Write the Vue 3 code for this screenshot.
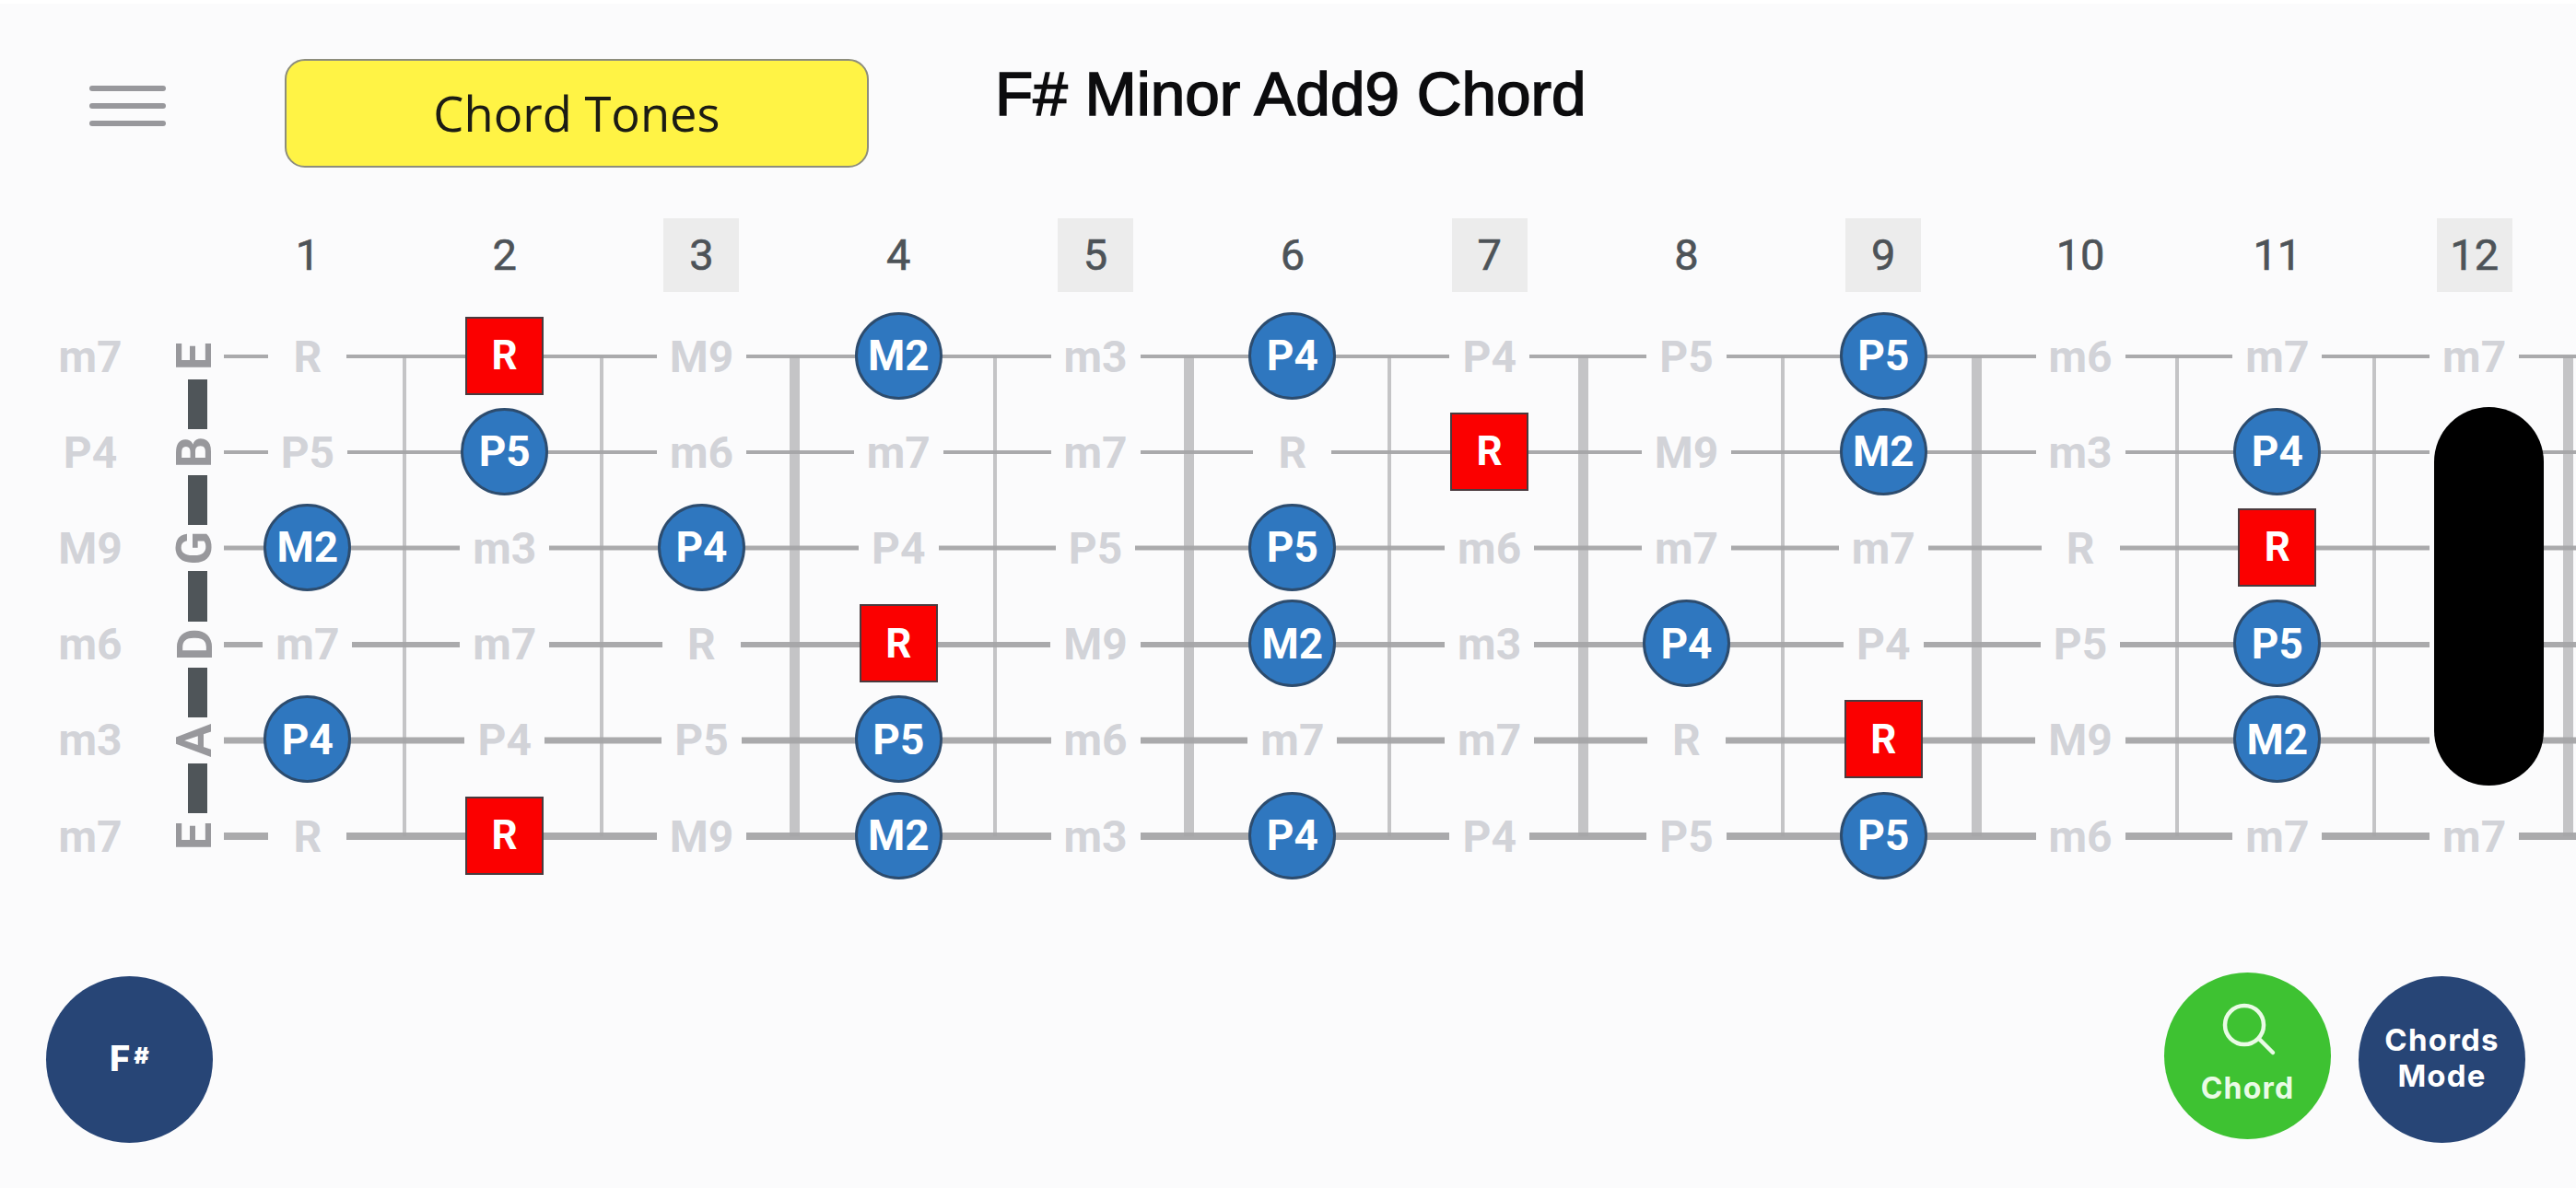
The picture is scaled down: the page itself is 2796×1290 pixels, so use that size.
<script setup>
const frets = [1, 2, 3, 4, 5, 6, 7, 8, 9, 10, 11, 12]
const marked = [3, 5, 7, 9, 12]
const thick = [3, 5, 7, 9, 12]

const rows = [
  { name: 'E', open: 'm7', size: 4, notes: ['R', 'R*', 'M9', 'M2o', 'm3', 'P4o', 'P4', 'P5', 'P5o', 'm6', 'm7', 'm7'] },
  { name: 'B', open: 'P4', size: 4, notes: ['P5', 'P5o', 'm6', 'm7', 'm7', 'R', 'R*', 'M9', 'M2o', 'm3', 'P4o', ''] },
  { name: 'G', open: 'M9', size: 5, notes: ['M2o', 'm3', 'P4o', 'P4', 'P5', 'P5o', 'm6', 'm7', 'm7', 'R', 'R*', ''] },
  { name: 'D', open: 'm6', size: 6, notes: ['m7', 'm7', 'R', 'R*', 'M9', 'M2o', 'm3', 'P4o', 'P4', 'P5', 'P5o', ''] },
  { name: 'A', open: 'm3', size: 7, notes: ['P4o', 'P4', 'P5', 'P5o', 'm6', 'm7', 'm7', 'R', 'R*', 'M9', 'M2o', ''] },
  { name: 'E', open: 'm7', size: 8, notes: ['R', 'R*', 'M9', 'M2o', 'm3', 'P4o', 'P4', 'P5', 'P5o', 'm6', 'm7', 'm7'] }
]

const kind = (n) => (n.endsWith('*') ? 'root' : n.endsWith('o') ? 'tone' : 'muted')
const text = (n) => n.replace(/[*o]$/, '')
</script>

<template>
  <div class="app">
    <header class="header">
      <div class="menu"><span></span><span></span><span></span></div>
      <div class="mode">Chord Tones</div>
      <h1 class="title">F# Minor Add9 Chord</h1>
    </header>

    <div class="numbers">
      <div v-for="f in frets" :key="f" class="number" :class="{ marked: marked.includes(f) }">{{ f }}</div>
    </div>

    <section class="board">
      <div class="frets">
        <div v-for="f in frets" :key="f" class="fret" :class="{ thick: thick.includes(f) }"></div>
      </div>
      <div class="nut"></div>
      <div v-for="(row, r) in rows" :key="r" class="row">
        <i class="string" :style="{ height: row.size + 'px' }"></i>
        <div class="open">{{ row.open }}</div>
        <div class="name"><span>{{ row.name }}</span></div>
        <div v-for="(n, c) in row.notes" :key="c" class="cell">
          <span class="note" :class="[kind(n), { blank: !n }]">{{ text(n) }}</span>
        </div>
      </div>
      <div class="capo"></div>
    </section>

    <footer class="footer">
      <button class="round navy root-key">F<sup>#</sup></button>
      <div class="actions">
        <button class="round green">
          <svg class="search" viewBox="0 0 60 60" width="60" height="60" fill="none" stroke="currentColor" stroke-width="4.5" stroke-linecap="round">
            <circle cx="25" cy="24" r="21" />
            <line x1="41" y1="39" x2="56" y2="54" />
          </svg>
          <span>Chord</span>
        </button>
        <button class="round navy chords">Chords<br />Mode</button>
      </div>
    </footer>
  </div>
</template>

<style scoped>
.app {
  box-sizing: border-box;
  width: 2796px;
  height: 1290px;
  overflow: hidden;
  background: #fbfbfc;
  border-top: 4px solid #ffffff;
  font-family: Roboto, "Liberation Sans", sans-serif;
}

.header {
  display: flex;
  align-items: flex-start;
  height: 233px;
  padding: 60px 0 0 97px;
  box-sizing: border-box;
}
.menu {
  display: flex;
  flex-direction: column;
  gap: 13px;
  width: 83px;
  margin-top: 29px;
}
.menu span {
  height: 6px;
  border-radius: 3px;
  background: #98989c;
}
.mode {
  box-sizing: border-box;
  width: 634px;
  height: 118px;
  margin-left: 129px;
  border: 2px solid #8d8d7c;
  border-radius: 22px;
  background: #fff345;
  color: #1c1c14;
  font-family: "Open Sans", sans-serif;
  font-size: 52.5px;
  line-height: 114px;
  text-align: center;
}
.title {
  margin: 2px 0 0 137px;
  color: #0c0c0e;
  font-family: "Liberation Sans", Arial, sans-serif;
  font-size: 67.5px;
  font-weight: 400;
  line-height: 72px;
  -webkit-text-stroke: 1.6px #0c0c0e;
}

.numbers {
  display: grid;
  grid-template-columns: repeat(12, 213.8px);
  padding-left: 227px;
  height: 80px;
  margin-bottom: 18px;
}
.number {
  justify-self: center;
  width: 82px;
  height: 80px;
  color: #4d5358;
  font-size: 47px;
  font-weight: 400;
  line-height: 80px;
  text-align: center;
  -webkit-text-stroke: 0.6px #4d5358;
}
.number.marked {
  background: #ececec;
}

.board {
  position: relative;
  height: 625px;
}
.frets {
  position: absolute;
  top: 52px;
  bottom: 52px;
  left: 227px;
  display: grid;
  grid-template-columns: repeat(12, 213.8px);
}
.fret {
  box-sizing: border-box;
  border-right: 4px solid #c4c4c6;
}
.fret.thick {
  border-right-width: 11px;
}
.nut {
  position: absolute;
  top: 72px;
  left: 204px;
  width: 21px;
  height: 476px;
  background: #4f5559;
}
.row {
  position: relative;
  display: grid;
  grid-template-columns: 196px 31px repeat(12, 213.8px);
  align-items: center;
  height: 104.2px;
}
.string {
  position: absolute;
  top: 50%;
  left: 243px;
  right: 0;
  transform: translateY(-50%);
  background: #a5a5a8;
  opacity: 0.95;
}
.open {
  color: #d2d3d8;
  font-size: 48px;
  font-weight: 700;
  text-align: center;
}
.name {
  position: relative;
  display: flex;
  align-items: center;
  justify-content: center;
  height: 50px;
  margin: 0 -4px;
  background: #fbfbfc;
}
.name span {
  color: #98989c;
  font-size: 54px;
  font-weight: 700;
  line-height: 1;
  transform: rotate(-90deg);
}
.cell {
  position: relative;
  display: flex;
  align-items: center;
  justify-content: center;
}
.note {
  box-sizing: border-box;
  display: flex;
  align-items: center;
  justify-content: center;
  font-size: 48px;
  font-weight: 700;
}
.note.muted {
  min-width: 85px;
  height: 60px;
  padding: 0 14px;
  background: #fbfbfc;
  color: #d2d3d8;
}
.note.blank {
  min-width: 97px;
}
.note.tone {
  width: 95px;
  height: 95px;
  margin-top: -2px;
  border: 3px solid #2d4c6e;
  border-radius: 50%;
  background: #2f77bf;
  color: #ffffff;
  font-size: 46px;
}
.note.root {
  width: 85px;
  height: 85px;
  margin-top: -2px;
  border: 2px solid #4a3a3e;
  background: #fb0000;
  color: #ffffff;
  font-size: 44px;
}
.capo {
  position: absolute;
  top: 107px;
  left: 2642px;
  width: 119px;
  height: 411px;
  border-radius: 60px;
  background: #000000;
}

.footer {
  display: flex;
  align-items: flex-start;
  justify-content: space-between;
  margin-top: 96px;
  padding: 0 55px 0 50px;
}
.actions {
  display: flex;
  gap: 30px;
}
.round {
  box-sizing: border-box;
  display: flex;
  flex-direction: column;
  align-items: center;
  justify-content: center;
  width: 181px;
  height: 181px;
  padding: 0;
  border: 0;
  border-radius: 50%;
  color: #ffffff;
  font-family: Inter, sans-serif;
  font-weight: 700;
}
.navy {
  background: #274576;
}
.green {
  background: #3ec232;
  color: #eafbe6;
  font-size: 32px;
  font-weight: 700;
  letter-spacing: 1.2px;
}
.search {
  margin: -3px 0 13px 2px;
}
.root-key {
  flex-direction: row;
  margin-top: 4px;
  font-size: 38px;
  font-weight: 800;
  padding-bottom: 4px;
}
.root-key sup {
  margin: -4px 0 0 4px;
  font-size: 25px;
  font-weight: 900;
  line-height: 1;
}
.chords {
  display: block;
  margin-top: 4px;
  padding-bottom: 4px;
  font-size: 33px;
  line-height: 39px;
  letter-spacing: 1.2px;
  text-align: center;
}
</style>

<style>
html, body {
  margin: 0;
  background: #fbfbfc;
}
</style>
